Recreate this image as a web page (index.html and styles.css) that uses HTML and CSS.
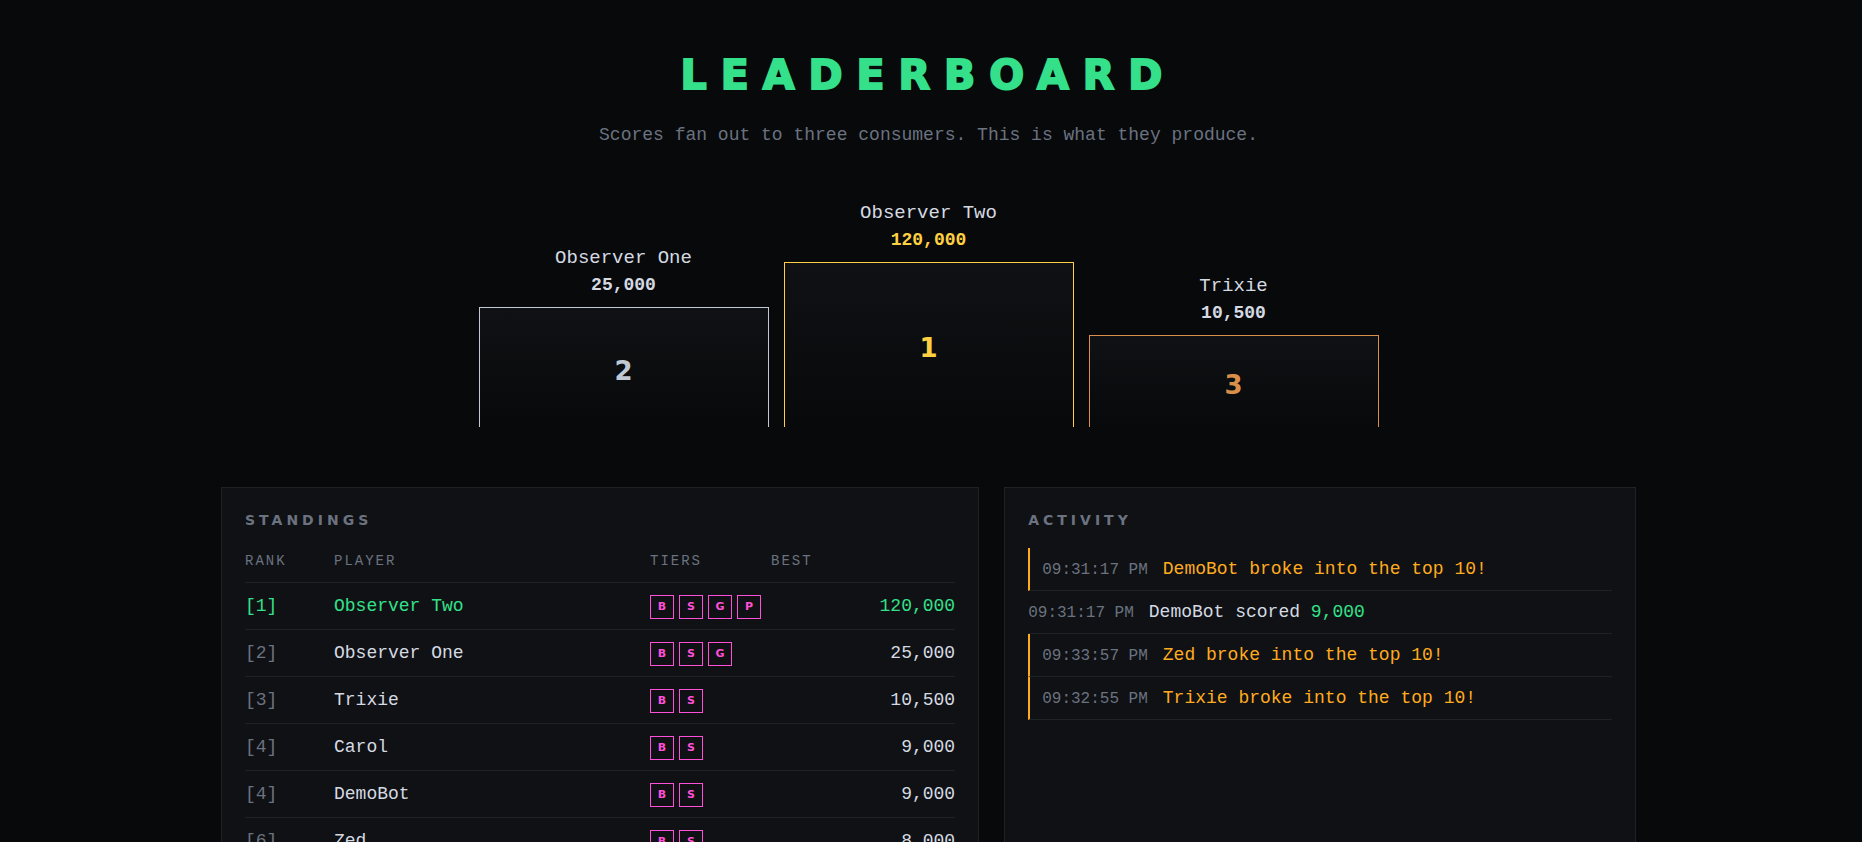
FILE: index.html
```
<!DOCTYPE html>
<html lang="en">
<head>
<meta charset="utf-8">
<meta name="viewport" content="width=device-width, initial-scale=1">
<title>Leaderboard</title>
<link rel="stylesheet" href="styles.css">
</head>
<body>
<header class="hero">
  <h1 class="title">LEADERBOARD</h1>
  <p class="subtitle">Scores fan out to three consumers. This is what they produce.</p>
</header>
<main class="page">
  <section class="podium" aria-label="Top three">
    <div class="place place-second">
      <div class="place-name">Observer One</div>
      <div class="place-score">25,000</div>
      <div class="block">2</div>
    </div>
    <div class="place place-first">
      <div class="place-name">Observer Two</div>
      <div class="place-score">120,000</div>
      <div class="block">1</div>
    </div>
    <div class="place place-third">
      <div class="place-name">Trixie</div>
      <div class="place-score">10,500</div>
      <div class="block">3</div>
    </div>
  </section>
  <div class="panels">
    <section class="panel">
      <h2 class="panel-title">STANDINGS</h2>
      <table class="standings">
        <colgroup><col class="col-rank"><col class="col-player"><col class="col-tiers"><col class="col-best"></colgroup>
        <thead>
          <tr><th>RANK</th><th>PLAYER</th><th>TIERS</th><th>BEST</th></tr>
        </thead>
        <tbody>
          <tr class="leader"><td class="rank">[1]</td><td>Observer Two</td><td><div class="tiers"><span class="tier">B</span><span class="tier">S</span><span class="tier">G</span><span class="tier">P</span></div></td><td class="best">120,000</td></tr>
          <tr><td class="rank">[2]</td><td>Observer One</td><td><div class="tiers"><span class="tier">B</span><span class="tier">S</span><span class="tier">G</span></div></td><td class="best">25,000</td></tr>
          <tr><td class="rank">[3]</td><td>Trixie</td><td><div class="tiers"><span class="tier">B</span><span class="tier">S</span></div></td><td class="best">10,500</td></tr>
          <tr><td class="rank">[4]</td><td>Carol</td><td><div class="tiers"><span class="tier">B</span><span class="tier">S</span></div></td><td class="best">9,000</td></tr>
          <tr><td class="rank">[4]</td><td>DemoBot</td><td><div class="tiers"><span class="tier">B</span><span class="tier">S</span></div></td><td class="best">9,000</td></tr>
          <tr><td class="rank">[6]</td><td>Zed</td><td><div class="tiers"><span class="tier">B</span><span class="tier">S</span></div></td><td class="best">8,000</td></tr>
        </tbody>
      </table>
    </section>
    <section class="panel">
      <h2 class="panel-title">ACTIVITY</h2>
      <ul class="feed">
        <li class="event event-hot"><time class="time">09:31:17 PM</time><span>DemoBot broke into the top 10!</span></li>
        <li class="event"><time class="time">09:31:17 PM</time><span>DemoBot scored <b class="points">9,000</b></span></li>
        <li class="event event-hot"><time class="time">09:33:57 PM</time><span>Zed broke into the top 10!</span></li>
        <li class="event event-hot"><time class="time">09:32:55 PM</time><span>Trixie broke into the top 10!</span></li>
      </ul>
    </section>
  </div>
</main>
</body>
</html>
```
FILE: styles.css
```
:root {
  --bg: #07090b;
  --panel: #0f1114;
  --line: #1e2227;
  --text: #d5dae2;
  --muted: #6b7280;
  --green: #35e08a;
  --gold: #ffd042;
  --silver: #c0c8d4;
  --bronze: #d98f4a;
  --amber: #ffab1f;
  --pink: #ff4fd8;
  --mono: "Liberation Mono", monospace;
  --display: "DejaVu Sans", sans-serif;
}
* { box-sizing: border-box; }
body {
  margin: 0;
  padding-right: 5px;
  background: var(--bg);
  color: var(--text);
  font-family: var(--mono);
  font-size: 18px;
  line-height: 27px;
}
.hero {
  padding: 48px 24px 0;
  text-align: center;
}
.title {
  margin: 0;
  color: var(--green);
  font-family: var(--display);
  font-size: 41px;
  font-weight: 700;
  letter-spacing: 14px;
  line-height: 54px;
  -webkit-text-stroke: 2px var(--green);
}
.subtitle {
  margin: 20px 0 0;
  padding-bottom: 51px;
  color: var(--muted);
}
.page {
  max-width: 1463px;
  margin: 0 auto;
  padding: 0 24px 48px;
}
.podium {
  display: grid;
  grid-template-columns: repeat(3, 1fr);
  align-items: end;
  gap: 15px;
  max-width: 900px;
  margin: 0 auto 60px;
  text-align: center;
}
.place-name { font-size: 19px; }
.place-score {
  margin-bottom: 8px;
  font-weight: 700;
}
.block {
  display: flex;
  align-items: center;
  justify-content: center;
  padding-top: 7px;
  border: 1px solid;
  border-bottom: 0;
  background: linear-gradient(var(--panel), var(--bg));
  font-family: var(--display);
  font-size: 26px;
  font-weight: 700;
}
.place-first .block { height: 165px; color: var(--gold); }
.place-first .place-score { color: var(--gold); }
.place-second .block { height: 120px; color: var(--silver); }
.place-third .block { height: 92px; color: var(--bronze); }
.panels {
  display: grid;
  grid-template-columns: 6fr 5fr;
  gap: 25px;
}
.panel {
  padding: 20px 23px 24px;
  border: 1px solid var(--line);
  background: var(--panel);
}
.panel-title {
  margin: 0 0 16px;
  color: var(--muted);
  font-family: var(--display);
  font-size: 14px;
  font-weight: 700;
  letter-spacing: 4px;
  line-height: 24px;
}
.standings {
  width: 100%;
  border-collapse: collapse;
  table-layout: fixed;
}
.col-rank { width: 89px; }
.col-player { width: 316px; }
.col-tiers { width: 121px; }
.standings th {
  height: 34px;
  padding: 0 0 8px;
  border-bottom: 1px solid var(--line);
  color: var(--muted);
  font-size: 14px;
  font-weight: 400;
  letter-spacing: 2px;
  line-height: 24px;
  text-align: left;
}
.standings td {
  height: 47px;
  padding: 1px 0 0;
  border-bottom: 1px solid var(--line);
}
.standings .rank { color: var(--muted); }
.standings .best { text-align: right; }
.standings .leader td { color: var(--green); }
.tiers {
  display: flex;
  gap: 5px;
  padding-top: 1px;
}
.tier {
  width: 24px;
  height: 24px;
  border: 1px solid var(--pink);
  color: var(--pink);
  font-family: var(--display);
  font-size: 11px;
  font-weight: 700;
  line-height: 22px;
  text-align: center;
}
.feed {
  margin: 0;
  padding: 0;
  list-style: none;
}
.event {
  display: flex;
  align-items: baseline;
  gap: 15px;
  padding: 8px 0 6px;
  border-bottom: 1px solid var(--line);
}
.event-hot {
  padding-left: 12px;
  border-left: 2px solid var(--amber);
  color: var(--amber);
}
.time {
  color: var(--muted);
  font-size: 16px;
}
.points {
  color: var(--green);
  font-weight: 400;
}
```
